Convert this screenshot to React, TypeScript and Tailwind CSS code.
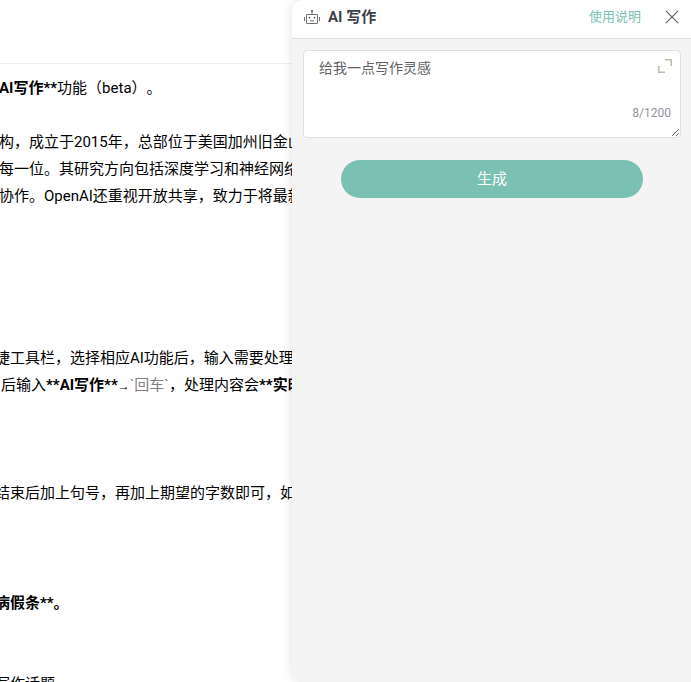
import { useState } from "react";

function RobotIcon() {
  return (
    <svg width="16" height="16" viewBox="0 0 16 16" fill="none" stroke="#707276" strokeWidth="1" aria-hidden="true">
      <rect x="2.5" y="5.5" width="11" height="9" rx="0.5" />
      <path d="M8 2.5v3M.5 8v4M15.5 8v4M6 11.5q2 1 4 0" />
      <circle cx="8" cy="2" r="1.2" fill="#5f7f72" stroke="none" />
      <circle cx="5.5" cy="8.7" r="0.9" fill="#606266" stroke="none" />
      <circle cx="10.5" cy="8.7" r="0.9" fill="#606266" stroke="none" />
    </svg>
  );
}

function CloseIcon() {
  return (
    <svg width="14" height="14" viewBox="0 0 14 14" fill="none" stroke="#606266" strokeWidth="1.2" aria-hidden="true">
      <path d="M.8.8l12.4 12.4M13.2.8L.8 13.2" />
    </svg>
  );
}

function ExpandIcon() {
  return (
    <svg width="14" height="14" viewBox="0 0 14 14" fill="none" stroke="#b9bfab" strokeWidth="1.6" aria-hidden="true">
      <path d="M7 .8h6.2V7M.8 7v6.2H7" />
    </svg>
  );
}

function Article() {
  return (
    <main className="min-w-0 flex-1 overflow-hidden whitespace-nowrap bg-white text-[15px] leading-[27px] text-black">
      <div className="h-16 border-b border-[#f0f0f0]" />
      <article className="-ml-px pt-[11px]">
        <p>
          <strong>AI写作**</strong>功能（beta）。
        </p>
        <p className="mt-[27px]">
          构，成立于2015年，总部位于美国加州旧金山
          <br />
          每一位。其研究方向包括深度学习和神经网络
          <br />
          协作。OpenAI还重视开放共享，致力于将最新
        </p>
        <ul className="-ml-1 mt-[135px]">
          <li>
            捷工具栏，选择相应AI功能后，输入需要处理
            <div className="pl-[6px]">
              后输入<strong>**AI写作**</strong>
              <span className="font-['Liberation_Sans',sans-serif] text-xs">→</span>
              <span className="text-[#808080]">`回车`</span>，处理内容会<strong>**实时</strong>
            </div>
          </li>
          <li className="mt-[81px]">结束后加上句号，再加上期望的字数即可，如</li>
          <li className="mt-[83px]">
            <strong>病假条**。</strong>
          </li>
          <li className="mt-[54px]">写作话题</li>
        </ul>
      </article>
    </main>
  );
}

function WritingPanel() {
  const [prompt, setPrompt] = useState("给我一点写作灵感");

  return (
    <aside className="z-10 flex w-[399px] shrink-0 flex-col overflow-hidden rounded-l-xl bg-[#f4f4f4] shadow-[0_0_12px_rgba(0,0,0,0.12)]">
      <header className="flex h-[39px] items-center border-b border-[#dcdfe6] bg-white px-3 pb-1">
        <RobotIcon />
        <h1 className="ml-2 text-[15px] font-bold text-[#40404c]">AI 写作</h1>
        <a href="#help" className="ml-auto text-[13px] text-[#7bc1b3]">
          使用说明
        </a>
        <button type="button" aria-label="关闭" className="ml-6">
          <CloseIcon />
        </button>
      </header>
      <div className="pl-[11px] pr-[10px] pt-[11px]">
        <div className="relative">
          <textarea
            aria-label="写作内容"
            maxLength={1200}
            value={prompt}
            onChange={(event) => setPrompt(event.target.value)}
            className="block h-[88px] w-full resize-y rounded border border-[#dcdfe6] bg-white py-[7px] pl-[15px] pr-10 text-sm leading-[21px] text-[#606266] outline-none"
          />
          <button type="button" aria-label="展开" className="absolute right-[9px] top-[9px]">
            <ExpandIcon />
          </button>
          <span className="absolute bottom-[17px] right-[10px] text-xs text-[#909399]">{prompt.length}/1200</span>
        </div>
        <div className="mt-[22px] px-[38px]">
          <button type="button" className="h-[38px] w-full rounded-full bg-[#7bc1b3] text-[15px] text-white">
            生成
          </button>
        </div>
      </div>
    </aside>
  );
}

export default function App() {
  return (
    <div className="flex h-screen overflow-hidden bg-white font-[Roboto,'Noto_Sans_CJK_SC',sans-serif] [text-spacing-trim:space-all]">
      <Article />
      <WritingPanel />
    </div>
  );
}
